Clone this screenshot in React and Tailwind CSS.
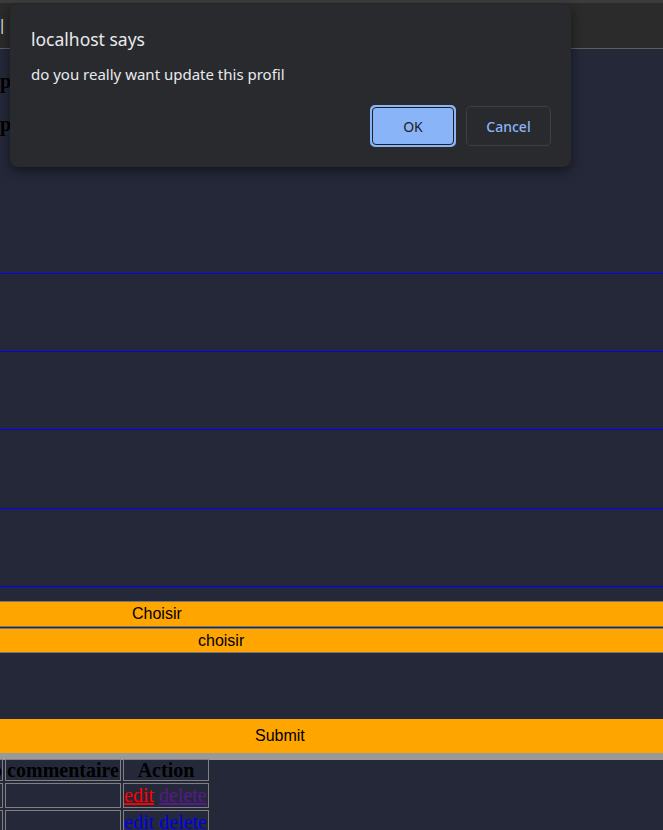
import React from 'react';

function Bar({ label, indent, className }) {
  return (
    <div className={'w-[700px] bg-[#ffa500] border-y border-[#767676] text-black text-[16px] font-["Liberation_Sans",Arial,sans-serif] flex items-center ' + className}>
      <span style={{ paddingLeft: indent }}>{label}</span>
    </div>
  );
}

export default function App() {
  const rows = [
    { edit: 'text-[#ff0000]', del: 'text-[#551a8b]' },
    { edit: 'text-[#0000ee]', del: 'text-[#0000ee]' },
  ];

  return (
    <div className="relative w-[663px] h-[830px] overflow-hidden bg-[#252839] font-['Liberation_Serif',serif]">
      {/* browser tab strip */}
      <div className="h-[49px] border-t-[3px] border-[#3c3c3c] bg-[#2b2b2b] border-b border-b-[#5f5f5f] flex items-center">
        <span className="-ml-[2px] text-[#e8eaed] text-[15px] font-['Noto_Sans',sans-serif] -mt-[2px]">| C</span>
      </div>

      {/* profile form */}
      <div className="h-[225px] border-b border-[#0000ff] pt-[21px] flex flex-col gap-[20px]">
        <p className="text-[20px] leading-[23px] font-bold text-black">p</p>
        <p className="text-[20px] leading-[23px] font-bold text-black">p</p>
      </div>
      <div className="h-[78px] border-b border-[#0000ff]" />
      <div className="h-[78px] border-b border-[#0000ff]" />
      <div className="h-[79px] border-b border-[#0000ff]" />
      <div className="h-[78px] border-b border-[#0000ff]" />

      <div className="pt-[14px] flex flex-col gap-[1px]">
        <Bar label="Choisir" indent={132} className="h-[26px]" />
        <Bar label="choisir" indent={198} className="h-[25px]" />
      </div>

      <div className="mt-[66px] h-[34px] w-[700px] bg-[#ffa500] flex items-center text-black text-[16px] font-['Liberation_Sans',Arial,sans-serif]">
        <span className="pl-[255px]">Submit</span>
      </div>
      <div className="h-[7px] w-[700px] bg-[#9a9a9a]" />

      {/* table */}
      <table className="-ml-[61px] border-separate border-spacing-x-[2px] border-spacing-y-[2px] -mt-[3px] text-[20px]">
        <thead>
          <tr>
            <th className="w-[62px] h-[22px] leading-[20px] border border-[#808080] text-right text-black overflow-hidden whitespace-nowrap p-0">photo</th>
            <th className="w-[116px] h-[22px] leading-[20px] border border-[#808080] text-black p-0">commentaire</th>
            <th className="w-[86px] h-[22px] leading-[20px] border border-[#808080] text-black p-0">Action</th>
          </tr>
        </thead>
        <tbody>
          {rows.map((r, i) => (
            <tr key={i}>
              <td className="h-[25px] border border-[#808080] p-0" />
              <td className="h-[25px] border border-[#808080] p-0" />
              <td className="h-[25px] leading-[23px] border border-[#808080] p-0 whitespace-nowrap">
                <a href="#" className={'underline ' + r.edit}>edit</a>{' '}
                <a href="#" className={'underline ' + r.del}>delete</a>
              </td>
            </tr>
          ))}
        </tbody>
      </table>

      {/* confirm dialog */}
      <div className="absolute left-[10px] top-[4px] w-[561px] h-[163px] rounded-[8px] bg-[#292a2d] shadow-[0_4px_12px_rgba(0,0,0,0.5)] px-[21px] pt-[24px] pb-[20px] flex flex-col font-['Noto_Sans',sans-serif]">
        <div className="text-[#e8eaed] text-[17.5px] leading-[22px]">localhost says</div>
        <div className="mt-[14px] text-[#e8eaed] text-[15px] leading-[20px]">do you really want update this profil</div>
        <div className="mt-auto flex justify-end gap-[10px] -mr-px">
          <button className="w-[86px] h-[42px] rounded-[5px] border-2 border-[#8ab4f8] bg-[#8ab4f8] p-0 flex items-center justify-center">
            <span className="w-full h-full rounded-[4px] border border-[#202124] flex items-center justify-center text-[#202124] text-[14px]">OK</span>
          </button>
          <button className="w-[85px] h-[40px] mt-px rounded-[5px] border border-[#3c4043] bg-transparent text-[#8ab4f8] text-[14px] font-medium">
            Cancel
          </button>
        </div>
      </div>
    </div>
  );
}
